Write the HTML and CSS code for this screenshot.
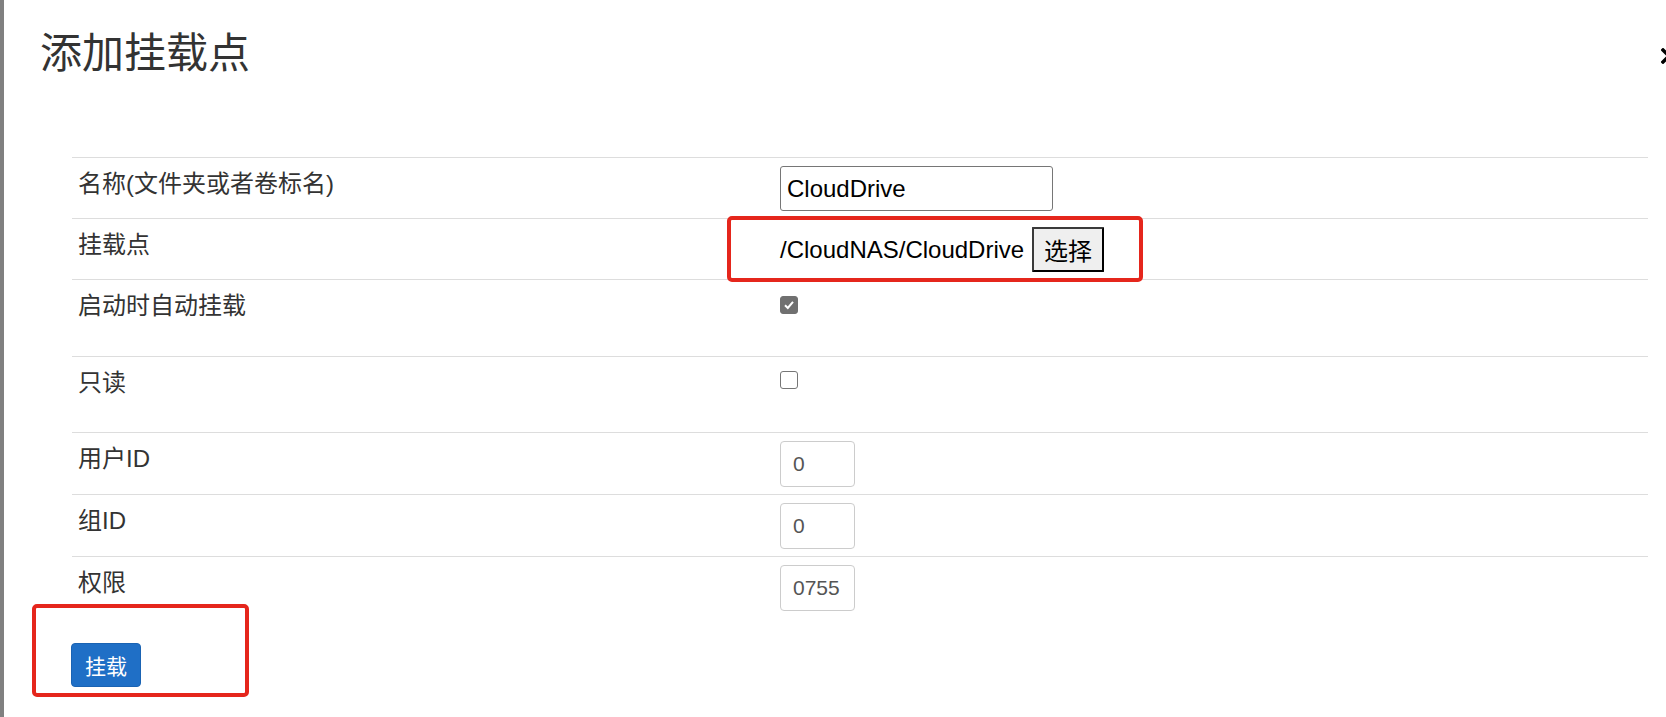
FILE: index.html
```html
<!DOCTYPE html>
<html lang="zh-CN">
<head>
<meta charset="utf-8">
<title>添加挂载点</title>
<link rel="stylesheet" href="styles.css">
</head>
<body>
<div class="page">
  <div class="bar"></div>
  <div class="modal">
    <div class="modal-header">
      <h2 class="title">添加挂载点</h2>
      <span class="close" aria-label="close">
        <svg width="16" height="16" viewBox="0 0 16 16"><path d="M2 2 L14 14 M14 2 L2 14" stroke="#000" stroke-width="3.4" fill="none" stroke-linecap="square"/></svg>
      </span>
    </div>
    <div class="modal-body">
      <table class="form-table">
        <colgroup><col class="c1"><col></colgroup>
        <tr>
          <td class="label">名称(文件夹或者卷标名)</td>
          <td><input class="name-input" type="text" value="CloudDrive"></td>
        </tr>
        <tr>
          <td class="label">挂载点</td>
          <td><div class="path-row"><span class="path">/CloudNAS/CloudDrive</span><button class="pick">选择</button></div></td>
        </tr>
        <tr>
          <td class="label">启动时自动挂载</td>
          <td><div class="check-cell first"><span class="check checked"><svg width="12" height="12" viewBox="0 0 12 12"><path d="M2 6.3 L4.8 9 L10 2.8" stroke="#fff" stroke-width="2" fill="none"/></svg></span></div></td>
        </tr>
        <tr>
          <td class="label">只读</td>
          <td><div class="check-cell"><span class="check"></span></div></td>
        </tr>
        <tr>
          <td class="label">用户ID</td>
          <td><input class="small-input" type="text" value="0"></td>
        </tr>
        <tr>
          <td class="label">组ID</td>
          <td><input class="small-input" type="text" value="0"></td>
        </tr>
        <tr>
          <td class="label">权限</td>
          <td><input class="small-input" type="text" value="0755"></td>
        </tr>
      </table>
      <button class="btn-primary">挂载</button>
    </div>
    <div class="mark mark-path"></div>
    <div class="mark mark-submit"></div>
  </div>
</div>
</body>
</html>
```

FILE: styles.css
```css
html, body {
  margin: 0;
  padding: 0;
  background: #fff;
  overflow: hidden;
}
body {
  font-family: "Liberation Sans", "Noto Sans CJK SC", sans-serif;
  color: #333;
}
.page {
  display: flex;
  height: 717px;
}
.bar {
  width: 4px;
  flex: none;
  background: #808080;
}
.modal {
  position: relative;
  flex: 1;
  min-width: 0;
}
.modal-header {
  display: flex;
  justify-content: space-between;
  align-items: flex-start;
  padding: 27px 0 0 36px;
}
.title {
  margin: 0;
  font-family: "Noto Sans CJK SC", sans-serif;
  font-weight: 400;
  font-size: 42px;
  line-height: 46px;
  color: #333;
}
.close {
  display: block;
  width: 16px;
  height: 16px;
  margin-top: 21px;
  margin-right: -11px;
}
.close svg { display: block; }
.modal-body {
  margin-top: 84px;
  padding-left: 67px;
}
.form-table {
  width: 1576px;
  margin-left: 1px;
  border-collapse: collapse;
  table-layout: fixed;
}
.form-table col.c1 { width: 702px; }
.form-table td {
  border-top: 1px solid #ddd;
  padding: 8px 6px 7px 6px;
  vertical-align: top;
}
.label {
  font-size: 24px;
  line-height: 36px;
  color: #333;
}
.name-input {
  box-sizing: border-box;
  display: block;
  width: 273px;
  height: 45px;
  margin: 0;
  padding: 0 6px;
  border: 1px solid #767676;
  border-radius: 3px;
  font-family: "Liberation Sans", sans-serif;
  font-size: 24px;
  color: #000;
  background: #fff;
}
.path-row {
  display: flex;
  align-items: center;
  gap: 8px;
  height: 45px;
}
.path {
  font-size: 24px;
  color: #000;
}
.pick {
  box-sizing: border-box;
  height: 45px;
  width: 72px;
  margin: 0;
  padding: 0;
  background: #efefef;
  border: 2px solid #3a3a3a;
  border-right-color: #000;
  border-bottom-color: #000;
  border-radius: 1px;
  font-family: "Noto Sans CJK SC", sans-serif;
  font-size: 24px;
  color: #000;
}
.check-cell {
  box-sizing: border-box;
  height: 60px;
  padding-top: 6px;
}
.check-cell.first {
  height: 61px;
  padding-top: 8px;
}
.check {
  box-sizing: border-box;
  display: flex;
  align-items: center;
  justify-content: center;
  width: 18px;
  height: 18px;
  border: 1px solid #767676;
  border-radius: 3px;
  background: #fff;
}
.check.checked {
  background: #707070;
  border-color: #707070;
}
.check svg { display: block; }
.small-input {
  box-sizing: border-box;
  display: block;
  width: 75px;
  height: 46px;
  margin: 0;
  padding: 0 12px;
  border: 1px solid #ccc;
  border-radius: 4px;
  font-family: "Liberation Sans", sans-serif;
  font-size: 21px;
  color: #555;
  background: #fff;
}
.btn-primary {
  display: block;
  box-sizing: border-box;
  height: 44px;
  margin-top: 25px;
  padding: 0 13px;
  background: #1f6fc6;
  border: 1px solid #1a63b3;
  border-radius: 4px;
  color: #fff;
  font-family: "Noto Sans CJK SC", sans-serif;
  font-size: 21px;
  line-height: 40px;
}
.mark {
  position: absolute;
  box-sizing: border-box;
  border: 4px solid #e5261c;
  border-radius: 5px;
}
.mark-path {
  left: 723px;
  top: 216px;
  width: 416px;
  height: 66px;
}
.mark-submit {
  left: 28px;
  top: 604px;
  width: 217px;
  height: 93px;
}
```
